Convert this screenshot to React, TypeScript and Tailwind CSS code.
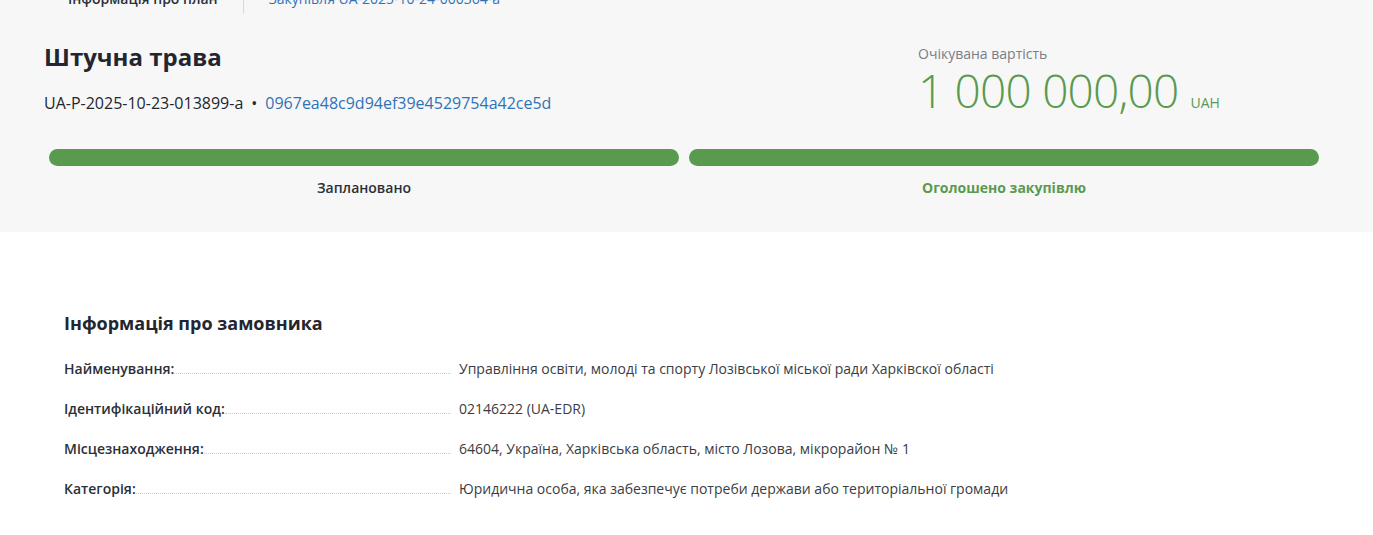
import React from "react";

const customerRows = [
  {
    label: "Найменування:",
    value: "Управління освіти, молоді та спорту Лозівської міської ради Харківскої області",
  },
  { label: "Ідентифікаційний код:", value: "02146222 (UA-EDR)" },
  {
    label: "Місцезнаходження:",
    value: "64604, Україна, Харківська область, місто Лозова, мікрорайон № 1",
  },
  {
    label: "Категорія:",
    value: "Юридична особа, яка забезпечує потреби держави або територіальної громади",
  },
];

function Stage({ label, active }: { label: string; active?: boolean }) {
  return (
    <div className="flex flex-1 flex-col items-center">
      <div className="h-[17px] w-full rounded-full bg-[#5a9a4f]" />
      <div
        className={
          active
            ? "mt-[11px] text-[14px] font-bold text-[#5a9a4f]"
            : "mt-[11px] text-[14px] font-semibold text-[#2b2f3a]"
        }
      >
        {label}
      </div>
    </div>
  );
}

export default function App() {
  return (
    <div
      className="min-h-[535px] overflow-hidden bg-white text-[#2b2f3a]"
      style={{ fontFamily: '"Open Sans", "Noto Sans", sans-serif' }}
    >
      {/* Header block */}
      <div className="flex h-[232px] flex-col bg-[#f7f7f8] px-[44px]">
        {/* Tabs, scrolled partly out of view */}
        <div className="-mt-[12px] flex items-start pl-[24px] text-[14px]">
          <div className="font-semibold text-[#2b2f3a]">Інформація про план</div>
          <div className="ml-[25px] mr-[25px] h-[26px] w-px bg-[#d6d9de]" />
          <div className="text-[#2f73b5]">Закупівля UA-2025-10-24-000364-a</div>
        </div>

        <div className="mt-[27px] flex">
          <div className="flex-1">
            <h1 className="text-[24px] font-bold leading-[32px] text-[#23262f]">Штучна трава</h1>
            <div className="mt-[19px] flex items-center text-[16px] leading-[22px]">
              <span className="text-[#23262f]">UA-P-2025-10-23-013899-a</span>
              <span className="mx-[8px] text-[#23262f]">•</span>
              <span className="text-[#2f73b5]">0967ea48c9d94ef39e4529754a42ce5d</span>
            </div>
          </div>
          <div className="w-[411px] pt-[3px]">
            <div className="text-[14px] leading-[20px] text-[#7a7d84]">Очікувана вартість</div>
            <div className="mt-[1px] flex items-baseline">
              <span className="text-[46px] font-light leading-[50px] tracking-[-0.8px] text-[#5a9a4f]">
                1 000 000,00
              </span>
              <span className="ml-[12px] text-[14px] text-[#5a9a4f]">UAH</span>
            </div>
          </div>
        </div>

        <div className="mt-[34px] flex gap-[10px] pl-[5px] pr-[10px]">
          <Stage label="Заплановано" />
          <Stage label="Оголошено закупівлю" active />
        </div>
      </div>

      {/* Customer info */}
      <div className="px-[64px] pt-[78px]">
        <h2 className="text-[18px] font-bold leading-[26px] text-[#23262f]">Інформація про замовника</h2>
        <div className="mt-[22px] flex flex-col">
          {customerRows.map((row) => (
            <div key={row.label} className="flex h-[40px] items-baseline text-[14px]">
              <div className="flex w-[387px] items-baseline">
                <span className="font-semibold text-[#2b2f3a]">{row.label}</span>
                <span className="flex-1 border-b border-dotted border-[#c9ccd1]" />
              </div>
              <span className="ml-[8px] text-[#3a3d44]">{row.value}</span>
            </div>
          ))}
        </div>
      </div>
    </div>
  );
}
